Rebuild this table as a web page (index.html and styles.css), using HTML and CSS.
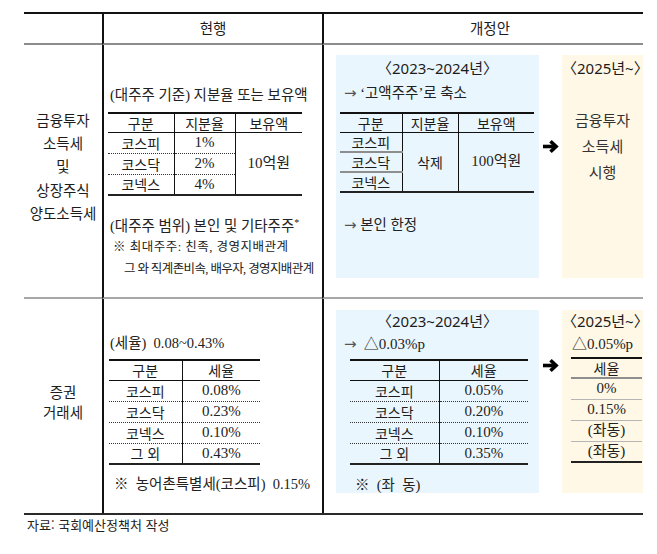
FILE: index.html
```html
<!DOCTYPE html>
<html lang="ko">
<head>
<meta charset="utf-8">
<title>금융투자소득세 및 증권거래세</title>
<link rel="stylesheet" href="styles.css">
</head>
<body>
<div class="sheet">
  <div class="cell hd c1"></div>
  <div class="cell hd c2">현행</div>
  <div class="cell hd c3">개정안</div>

  <div class="cell r1 c1 label">
    <p>금융투자</p><p>소득세</p><p>및</p><p>상장주식</p><p>양도소득세</p>
  </div>
  <div class="cell r1 c2 cur cur1">
    <p class="line ser">(대주주 기준) 지분율 또는 보유액</p>
    <table class="mini t1">
      <tr class="h"><th class="w66">구분</th><th class="w61 v">지분율</th><th class="w67 v">보유액</th></tr>
      <tr class="d"><td>코스피</td><td class="v num">1%</td><td class="v num" rowspan="3">10억원</td></tr>
      <tr class="d dot"><td>코스닥</td><td class="v num">2%</td></tr>
      <tr class="d dot"><td>코넥스</td><td class="v num">4%</td></tr>
    </table>
    <p class="line ser gap20">(대주주 범위) 본인 및 기타주주<sup>*</sup></p>
    <p class="note ser">※ 최대주주: 친족, 경영지배관계</p>
    <p class="note ser indent">그 와 직계존비속, 배우자, 경영지배관계</p>
  </div>
  <div class="cell r1 c3 prop">
    <div class="box blue b1">
      <p class="yr">〈2023~2024년〉</p>
      <p class="line ser arrowline"><span class="arr">→</span> ‘고액주주’로 축소</p>
      <table class="mini t2">
        <tr class="h"><th class="w62">구분</th><th class="w56 v">지분율</th><th class="w76 v">보유액</th></tr>
        <tr class="e"><td>코스피</td><td class="v" rowspan="3">삭제</td><td class="v num" rowspan="3">100억원</td></tr>
        <tr class="e sol"><td>코스닥</td></tr>
        <tr class="e sol"><td>코넥스</td></tr>
      </table>
      <p class="line ser arrowline gap22"><span class="arr">→</span> 본인 한정</p>
    </div>
    <div class="arrowcol a1">
      <svg width="18" height="15" viewBox="0 0 18 15"><path d="M1 7.5H13.5" stroke="#000" stroke-width="3.6" fill="none"/><path d="M8.5 2.2l5.6 5.3-5.6 5.3" stroke="#000" stroke-width="3.6" fill="none"/></svg>
    </div>
    <div class="box yellow b1 ycenter">
      <p class="yr">〈2025년~〉</p>
      <div class="ytext">
        <p>금융투자</p><p>소득세</p><p>시행</p>
      </div>
    </div>
  </div>

  <div class="cell r2 c1 label">
    <p>증권</p><p>거래세</p>
  </div>
  <div class="cell r2 c2 cur cur2">
    <p class="line ser">(세율) &nbsp;0.08~0.43%</p>
    <table class="mini t3">
      <tr class="h"><th class="w73">구분</th><th class="w78 v">세율</th></tr>
      <tr class="f"><td>코스피</td><td class="v num">0.08%</td></tr>
      <tr class="f dot"><td>코스닥</td><td class="v num">0.23%</td></tr>
      <tr class="f dot"><td>코넥스</td><td class="v num">0.10%</td></tr>
      <tr class="f dot"><td>그 외</td><td class="v num">0.43%</td></tr>
    </table>
    <p class="line ser foot">※ &nbsp;농어촌특별세(코스피) &nbsp;0.15%</p>
  </div>
  <div class="cell r2 c3 prop prop2">
    <div class="box blue b2">
      <p class="yr">〈2023~2024년〉</p>
      <p class="line ser arrowline tight"><span class="arr">→</span> &nbsp;<span class="pct">△0.03%p</span></p>
      <table class="mini t4">
        <tr class="h"><th class="w89">구분</th><th class="w89 v">세율</th></tr>
        <tr class="f"><td>코스피</td><td class="v num">0.05%</td></tr>
        <tr class="f dot"><td>코스닥</td><td class="v num">0.20%</td></tr>
        <tr class="f dot"><td>코넥스</td><td class="v num">0.10%</td></tr>
        <tr class="f dot"><td>그 외</td><td class="v num">0.35%</td></tr>
      </table>
      <p class="line ser foot2">※ &nbsp;(좌 &nbsp;동)</p>
    </div>
    <div class="arrowcol a2">
      <svg width="18" height="15" viewBox="0 0 18 15"><path d="M1 7.5H13.5" stroke="#000" stroke-width="3.6" fill="none"/><path d="M8.5 2.2l5.6 5.3-5.6 5.3" stroke="#000" stroke-width="3.6" fill="none"/></svg>
    </div>
    <div class="box yellow b2 ycenter">
      <p class="yr">〈2025년~〉</p>
      <p class="line ser pct tight">△0.05%p</p>
      <table class="mini t5">
        <tr class="h"><th class="w71">세율</th></tr>
        <tr class="g"><td class="num">0%</td></tr>
        <tr class="g sol1"><td class="num">0.15%</td></tr>
        <tr class="g sol1"><td class="num">(좌동)</td></tr>
        <tr class="g sol1"><td class="num">(좌동)</td></tr>
      </table>
    </div>
  </div>
</div>
<p class="source">자료: 국회예산정책처 작성</p>
</body>
</html>
```

FILE: styles.css
```css
* { box-sizing: border-box; margin: 0; padding: 0; }
html, body { background: #fff; }
body {
  width: 657px;
  height: 554px;
  overflow: hidden;
  font-family: "Noto Sans CJK KR", sans-serif;
  color: #1c1c1c;
}
.sheet {
  display: grid;
  grid-template-columns: 78px 220px 321px;
  grid-template-rows: 31px 254px 214px;
  width: 619px;
  margin: 12px 0 0 24px;
  border-top: 2px solid #111;
  border-bottom: 2px solid #2a2a2a;
}
.cell { min-width: 0; }
.c2, .c3 { border-left: 2px solid #111; }
.hd {
  border-bottom: 2px solid #8c8c8c;
  display: flex;
  align-items: center;
  justify-content: center;
  font-size: 14.5px;
  line-height: 1;
}
.hd.c3 { padding-left: 13px; }
.r1 { border-bottom: 2px solid #a8a8a8; }
.label {
  display: flex;
  flex-direction: column;
  justify-content: center;
  align-items: center;
  font-size: 14.5px;
}
.r1.label { line-height: 23.3px; padding-bottom: 10px; }
.r2.label { line-height: 20px; padding-bottom: 9px; }

.ser { font-family: "Liberation Serif", "Noto Sans CJK KR", serif; }
.line { font-size: 14.5px; line-height: 20px; white-space: nowrap; color: #222; }
.line sup { font-size: 10px; vertical-align: 5px; line-height: 0; }
.arr { font-family: "DejaVu Sans", sans-serif; font-size: 15px; color: #555; }
.note { font-size: 12.5px; line-height: 22px; white-space: nowrap; color: #222; padding-left: 3px; letter-spacing: 0.5px; }
.note.indent { padding-left: 14px; letter-spacing: -0.6px; }

.cur1 { padding: 40px 0 0 6px; }
.cur1 .t1 { margin: 7px 0 0 -2px; }
.gap20 { margin-top: 20px; }
.cur2 { padding: 34px 0 0 6px; }
.cur2 .t3 { margin: 6px 0 0 -1px; }
.foot { margin: 9px 0 0 4px; font-size: 14.5px; }

/* mini tables */
.mini {
  border-collapse: collapse;
  table-layout: fixed;
  font-size: 14px;
  border-top: 2px solid #111;
  border-bottom: 2px solid #222;
}
.mini th, .mini td {
  padding: 0;
  text-align: center;
  vertical-align: middle;
  font-weight: normal;
  line-height: 1;
  white-space: nowrap;
}
.mini tr.h th { border-bottom: 1.5px solid #111; }
.mini .v { border-left: 1.5px solid #111; }
.mini .num { font-family: "Liberation Serif", "Noto Sans CJK KR", serif; font-size: 15px; color: #222; }
.mini tr.dot td { border-top: 1px dotted #333; }
.mini tr.dot td[rowspan] { border-top: none; }
.mini tr.sol td { border-top: 2px solid #8e8e8e; }
.mini tr.sol1 td { border-top: 1px solid #b5b5b5; }

.t1 tr.h { height: 19px; }
.t1 tr.d { height: 21px; }
.t2 tr.h { height: 19px; }
.t2 tr.e { height: 20px; }
.t3 tr.h, .t4 tr.h { height: 20px; }
.t3 tr.f, .t4 tr.f { height: 21px; }
.t5 tr.h { height: 20px; }
.t5 tr.g { height: 21px; }
.t5 tr.h th { border-bottom: 2px solid #8e8e8e; }

.w66 { width: 66px; } .w61 { width: 61px; } .w67 { width: 67px; }
.w62 { width: 62px; } .w56 { width: 56px; } .w76 { width: 76px; }
.w73 { width: 73px; } .w78 { width: 78px; }
.w89 { width: 89px; } .w71 { width: 71px; }

/* proposal column */
.prop { display: flex; padding: 10px 0 0 12px; }
.prop2 { padding-top: 11px; }
.box { flex: none; }
.blue { width: 203px; background: #eaf6fd; }
.yellow { width: 81px; background: #fff8e6; }
.b1 { height: 223px; }
.b2 { height: 183px; }
.arrowcol { width: 23px; flex: none; display: flex; justify-content: center; }
.arrowcol svg { display: block; }
.a1 { padding-top: 84px; }
.a2 { padding-top: 48px; }

.yr {
  font-family: "Noto Sans", "Noto Sans CJK KR", sans-serif;
  font-size: 15px;
  line-height: 20px;
  text-align: center;
  white-space: nowrap;
}
.b1 .yr { margin-top: 3px; }
.b2 .yr { margin-top: 1px; }
.arrowline { padding-left: 8px; margin-top: 5px; }
.arrowline.tight { margin-top: 3px; }
.pct { font-size: 15px; }
.b1 .t2 { margin: 9px 0 0 4px; }
.gap22 { margin-top: 22px; }
.b2 .t4 { margin: 5px 0 0 14px; }
.foot2 { margin: 10px 0 0 19px; font-size: 14.5px; }

.ycenter { text-align: center; }
.ytext { margin-top: 29px; font-size: 15px; line-height: 26px; color: #333; }
.yellow .pct { margin-top: 3px; text-align: center; }
.b2 .t5 { margin: 3px 0 0 9px; }

.source {
  margin: 1px 0 0 27px;
  font-size: 13px;
  line-height: 18px;
  color: #222;
}
```
